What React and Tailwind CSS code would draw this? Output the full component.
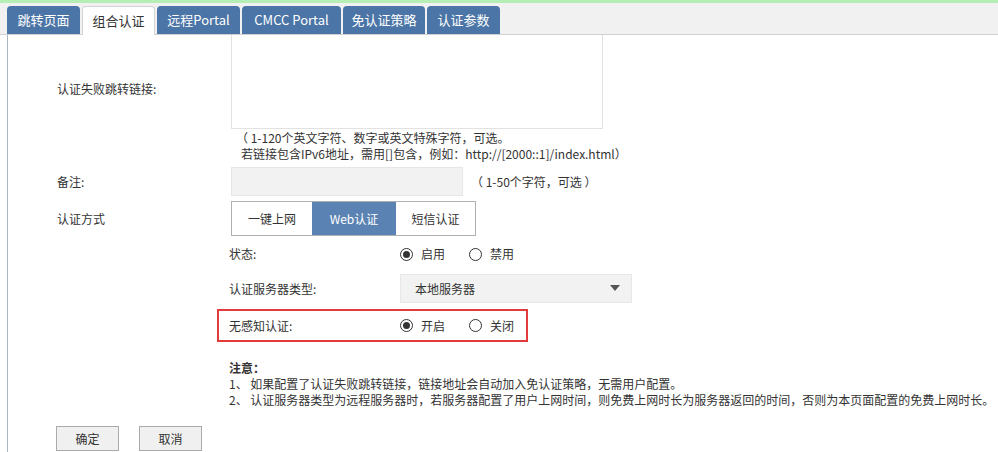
const font = { fontFamily: '"Noto Sans CJK SC", "Microsoft YaHei", sans-serif' };

const tabs = ["跳转页面", "组合认证", "远程Portal", "CMCC Portal", "免认证策略", "认证参数"];
const tabWidths = ["w-[73px]", "w-[73px]", "w-[83px]", "w-[99px]", "w-[82px]", "w-[73px]"];

function Radio({ checked, label }) {
  return (
    <span className="flex items-center gap-[8px]">
      <span className="w-[13px] h-[13px] rounded-full border border-[#333] flex items-center justify-center">
        {checked && <span className="w-[7px] h-[7px] rounded-full bg-[#333]" />}
      </span>
      <span>{label}</span>
    </span>
  );
}

function RadioRow({ a, b }) {
  return (
    <div className="flex items-center gap-[24px]">
      <Radio checked label={a} />
      <Radio label={b} />
    </div>
  );
}

export default function App() {
  return (
    <div className="w-[998px] h-[452px] bg-white text-[12px] text-[#333] overflow-hidden" style={font}>
      <div className="h-[3px] bg-[#b6efb6]" />
      {/* tab strip */}
      <div className="h-[32px] bg-[#f1f1f1] border-b border-[#cfcfcf] flex items-end pl-[7px] gap-[2px]">
        {tabs.map((t, i) =>
          i === 1 ? (
            <div
              key={t}
              className={`${tabWidths[i]} h-[29px] -mb-px bg-white border border-b-0 border-[#d4d4d4] rounded-t-[4px] flex items-center justify-center text-[13px] text-[#333]`}
            >
              {t}
            </div>
          ) : (
            <div
              key={t}
              className={`${tabWidths[i]} h-[28px] bg-[#4b75a6] rounded-t-[4px] flex items-center justify-center text-[13px] text-white`}
            >
              {t}
            </div>
          )
        )}
      </div>

      {/* content */}
      <div className="ml-[7px] border-l border-[#a9b6c4] h-[418px] pl-[49px]">
        <div className="flex">
          <div className="w-[174px] pt-[46px] leading-[16px]">认证失败跳转链接:</div>
          <div className="w-[372px] h-[94px] border-x border-b border-[#e2e2e2]" />
        </div>
        <div className="pl-[179px] pt-[1px] leading-[16px]">
          <div>（ 1-120个英文字符、数字或英文特殊字符，可选。</div>
          <div className="pl-[5px]">若链接包含IPv6地址，需用[]包含，例如：http://[2000::1]/index.html）</div>
        </div>

        <div className="flex items-center mt-[5px]">
          <div className="w-[174px]">备注:</div>
          <div className="w-[232px] h-[29px] bg-[#f2f2f2] border border-[#e6e6e6]" />
          <div className="ml-[8px]">（ 1-50个字符，可选 ）</div>
        </div>

        <div className="flex items-center mt-[5px]">
          <div className="w-[174px]">认证方式</div>
          <div className="flex h-[35px] border border-[#b0b0b0]">
            <div className="w-[80px] flex items-center justify-center">一键上网</div>
            <div className="w-[84px] flex items-center justify-center bg-[#5a82b2] text-white">Web认证</div>
            <div className="w-[79px] flex items-center justify-center">短信认证</div>
          </div>
        </div>

        <div className="pl-[172px]">
          <div className="flex items-center h-[26px] mt-[5px]">
            <div className="w-[171px]">状态:</div>
            <RadioRow a="启用" b="禁用" />
          </div>
          <div className="flex items-center mt-[7px]">
            <div className="w-[171px]">认证服务器类型:</div>
            <div className="w-[232px] h-[29px] bg-[#f2f2f2] border border-[#e8e8e8] flex items-center justify-between pl-[14px] pr-[11px]">
              <span>本地服务器</span>
              <svg width="10" height="7" viewBox="0 0 10 7">
                <path d="M0 0 L10 0 L5 6 Z" fill="#555" />
              </svg>
            </div>
          </div>
          <div className="-ml-[12px] w-[311px] h-[33px] mt-[6px] border-2 border-[#e23b3b] flex items-center pl-[10px]">
            <div className="w-[171px]">无感知认证:</div>
            <RadioRow a="开启" b="关闭" />
          </div>

          <div className="mt-[18px] leading-[16px]">
            <div className="font-bold">注意：</div>
            <div>1、 如果配置了认证失败跳转链接，链接地址会自动加入免认证策略，无需用户配置。</div>
            <div>2、 认证服务器类型为远程服务器时，若服务器配置了用户上网时间，则免费上网时长为服务器返回的时间，否则为本页面配置的免费上网时长。</div>
          </div>
        </div>

        <div className="flex gap-[20px] mt-[18px] -ml-[1px]">
          <div className="w-[63px] h-[25px] bg-[#f0f0f0] border border-[#aaa] flex items-center justify-center">确定</div>
          <div className="w-[63px] h-[25px] bg-[#f0f0f0] border border-[#aaa] flex items-center justify-center">取消</div>
        </div>
      </div>
    </div>
  );
}
